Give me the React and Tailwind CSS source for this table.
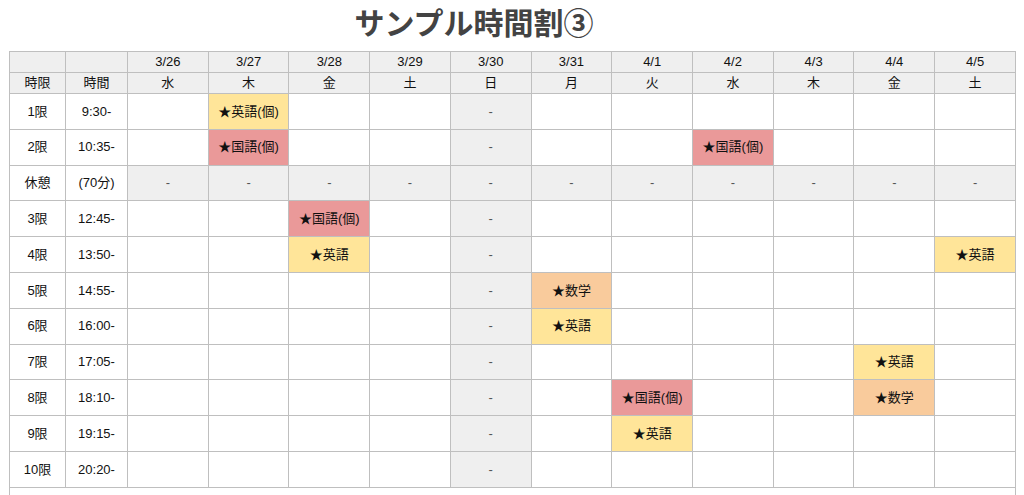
const days = [
  ["3/26", "水"],
  ["3/27", "木"],
  ["3/28", "金"],
  ["3/29", "土"],
  ["3/30", "日"],
  ["3/31", "月"],
  ["4/1", "火"],
  ["4/2", "水"],
  ["4/3", "木"],
  ["4/4", "金"],
  ["4/5", "土"],
];

const colors = {
  y: "bg-[#ffe599]",
  r: "bg-[#ea9999]",
  o: "bg-[#f9cb9c]",
};

// lessons keyed by day index
const rows = [
  { p: "1限", t: "9:30-", cells: { 1: ["★英語(個)", "y"] } },
  { p: "2限", t: "10:35-", cells: { 1: ["★国語(個)", "r"], 7: ["★国語(個)", "r"] } },
  { p: "休憩", t: "(70分)", rest: true },
  { p: "3限", t: "12:45-", cells: { 2: ["★国語(個)", "r"] } },
  { p: "4限", t: "13:50-", cells: { 2: ["★英語", "y"], 10: ["★英語", "y"] } },
  { p: "5限", t: "14:55-", cells: { 5: ["★数学", "o"] } },
  { p: "6限", t: "16:00-", cells: { 5: ["★英語", "y"] } },
  { p: "7限", t: "17:05-", cells: { 9: ["★英語", "y"] } },
  { p: "8限", t: "18:10-", cells: { 6: ["★国語(個)", "r"], 9: ["★数学", "o"] } },
  { p: "9限", t: "19:15-", cells: { 6: ["★英語", "y"] } },
  { p: "10限", t: "20:20-", cells: {} },
];

const cell = "border border-[#bfbfbf] text-center align-middle p-0";

export default function App() {
  return (
    <div
      className="w-[1024px] h-[495px] overflow-hidden bg-white text-[#111]"
      style={{ fontFamily: '"Liberation Sans", Arial, "Noto Sans CJK JP", sans-serif' }}
    >
      <h1
        className="h-[51px] w-[948px] text-center text-[30px] font-bold text-[#434343] leading-[42px]"
        style={{ fontFamily: '"Noto Sans CJK JP", sans-serif' }}
      >
        サンプル時間割③
      </h1>
      <table className="ml-[9px] w-[1007px] table-fixed border-collapse text-[13px]">
        <colgroup>
          <col className="w-[56px]" />
          <col className="w-[62px]" />
          {days.map(([d]) => (
            <col key={d} />
          ))}
        </colgroup>
        <thead>
          <tr className="h-[21px] bg-[#efefef]">
            <th className={`${cell} font-normal`}></th>
            <th className={`${cell} font-normal`}></th>
            {days.map(([d]) => (
              <th key={d} className={`${cell} font-normal`}>
                {d}
              </th>
            ))}
          </tr>
          <tr className="h-[21px] bg-[#efefef]">
            <th className={`${cell} font-normal`}>時限</th>
            <th className={`${cell} font-normal`}>時間</th>
            {days.map(([d, w]) => (
              <th key={d} className={`${cell} font-normal`}>
                {w}
              </th>
            ))}
          </tr>
        </thead>
        <tbody>
          {rows.map((r) => (
            <tr key={r.p} className="h-[35.8px]">
              <td className={cell}>{r.p}</td>
              <td className={cell}>{r.t}</td>
              {days.map(([d], i) => {
                if (r.rest || i === 4) {
                  return (
                    <td key={d} className={`${cell} bg-[#efefef] text-[#555]`}>
                      -
                    </td>
                  );
                }
                const c = r.cells[i];
                return (
                  <td key={d} className={`${cell} ${c ? colors[c[1]] : ""}`}>
                    {c ? c[0] : ""}
                  </td>
                );
              })}
            </tr>
          ))}
          <tr className="h-[36px]">
            <td colSpan={13} className={cell}></td>
          </tr>
        </tbody>
      </table>
    </div>
  );
}
